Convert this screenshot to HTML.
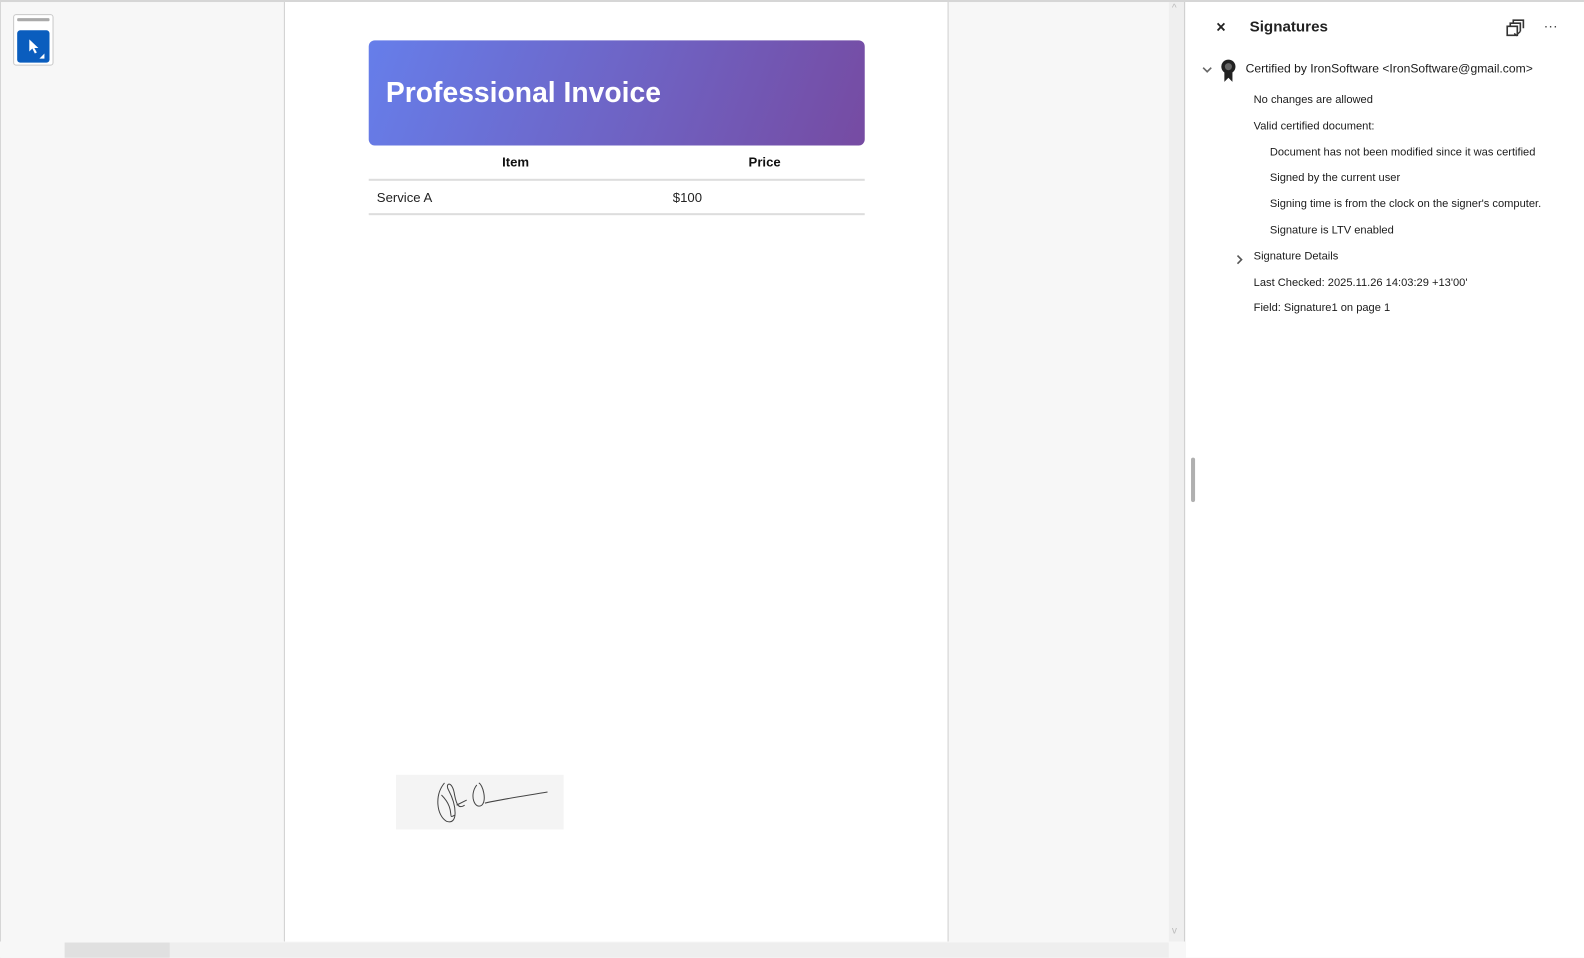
<!DOCTYPE html>
<html><head><meta charset="utf-8"><style>
*{margin:0;padding:0;box-sizing:border-box}
html,body{width:1584px;height:948px;overflow:hidden;background:#f7f7f7}
#w{position:absolute;left:0;top:0;width:1568px;height:939px;transform:scale(1.0102);transform-origin:0 0;font-family:"Liberation Sans",sans-serif;color:#222}
.abs{position:absolute}
.t{position:absolute;font-size:11px;color:#1b1b1b;white-space:nowrap}
</style></head><body><div id="w">
<div class="abs" style="left:0;top:0;width:1568px;height:2px;background:#d6d6d6"></div>
<div class="abs" style="left:0;top:0;width:1px;height:948px;background:#d6d6d6"></div>
<div class="abs" style="left:13px;top:14px;width:40px;height:51px;border:1px solid #c8c8c8;border-radius:3px;background:#fff"></div>
<div class="abs" style="left:17px;top:18px;width:32px;height:3px;background:#aaa;border-radius:1px"></div>
<div class="abs" style="left:17px;top:30px;width:32px;height:32px;background:#0a5dbe;border-radius:3px"></div>
<svg class="abs" style="left:17px;top:30px" width="32" height="32"><path d="M12 9 L12 21 L15 18 L17.5 23 L19.5 22 L17 17.5 L21 17.5 Z" fill="#fff"/><path d="M27 23 L27 28 L22 28 Z" fill="#fff"/></svg>
<div class="abs" style="left:281px;top:2px;width:658px;height:930px;background:#fff;border-left:1px solid #cfcfcf;border-right:1px solid #cfcfcf"></div>
<div class="abs" style="left:365px;top:40px;width:491px;height:104px;border-radius:6px;background:linear-gradient(110deg,#667eea,#764ba2)"></div>
<div class="t" style="left:382px;top:76px;font-size:28px;font-weight:bold;color:#fff">Professional Invoice</div>
<div class="t" style="left:497px;top:153px;font-size:13px;font-weight:bold;color:#111">Item</div>
<div class="t" style="left:741px;top:153px;font-size:13px;font-weight:bold;color:#111">Price</div>
<div class="abs" style="left:365px;top:177px;width:491px;height:2px;background:#ddd"></div>
<div class="t" style="left:373px;top:188px;font-size:13px;color:#222">Service A</div>
<div class="t" style="left:666px;top:188px;font-size:13px;color:#222">$100</div>
<div class="abs" style="left:365px;top:211px;width:491px;height:2px;background:#ddd"></div>
<div class="abs" style="left:392px;top:767px;width:166px;height:54px;background:#f4f4f4"></div>
<svg class="abs" style="left:392px;top:767px" width="166" height="54"><path d="M45 20 C60 35 50 45 58 40 M48 8 C38 20 40 40 50 46 C62 50 60 30 52 15 C48 8 56 5 58 20 C60 30 62 34 68 30 M80 10 C72 20 78 35 85 30 C90 25 86 10 82 8 M88 28 C100 25 120 22 150 17 M60 30 L70 25" fill="none" stroke="#444" stroke-width="1"/></svg>
<div class="abs" style="left:1157px;top:2px;width:16px;height:930px;background:#efefef;border-right:1px solid #d0d0d0"></div>
<div class="t" style="left:1160px;top:3px;color:#bbb;font-size:10px">^</div>
<div class="t" style="left:1160px;top:916px;color:#bbb;font-size:10px">v</div>
<div class="abs" style="left:0;top:932px;width:1157px;height:16px;background:#f7f7f7"></div>
<div class="abs" style="left:64px;top:933px;width:1093px;height:15px;background:#eeeeee"></div>
<div class="abs" style="left:64px;top:933px;width:104px;height:15px;background:#e0e0e0"></div>
<div class="abs" style="left:1174px;top:2px;width:410px;height:946px;background:#fff"></div>
<div class="abs" style="left:1179px;top:453px;width:4px;height:44px;background:#b0b0b0;border-radius:2px"></div>
<div class="t" style="left:1204px;top:19px;font-size:16px;font-weight:bold;color:#222">×</div>
<div class="t" style="left:1237px;top:18px;font-size:15px;font-weight:bold;color:#222">Signatures</div>
<svg class="abs" style="left:1489px;top:18px" width="22" height="20"><path d="M3 8 H13 V17 H3 Z M6 8 V5 H16 V13 M9 5 V2 H19 V10" fill="none" stroke="#333" stroke-width="1.6"/><path d="M10 15 L12 17 L16 13" fill="none" stroke="#333" stroke-width="1.4"/></svg>
<div class="t" style="left:1528px;top:17px;font-size:14px;color:#444">···</div>
<svg class="abs" style="left:1189px;top:64px" width="12" height="10"><path d="M2 3 L6 7 L10 3" fill="none" stroke="#666" stroke-width="1.6"/></svg>
<svg class="abs" style="left:1207px;top:58px" width="18" height="24"><circle cx="9" cy="8" r="7" fill="#222"/><circle cx="9" cy="8" r="3.5" fill="#666"/><path d="M5 13 L5 23 L9 19 L13 23 L13 13 Z" fill="#222"/></svg>
<div class="t" style="left:1233px;top:61px;font-size:12px">Certified by IronSoftware &lt;IronSoftware@gmail.com&gt;</div>
<div class="t" style="left:1241px;top:93px">No changes are allowed</div>
<div class="t" style="left:1241px;top:119px">Valid certified document:</div>
<div class="t" style="left:1257px;top:145px">Document has not been modified since it was certified</div>
<div class="t" style="left:1257px;top:170px">Signed by the current user</div>
<div class="t" style="left:1257px;top:196px">Signing time is from the clock on the signer's computer.</div>
<div class="t" style="left:1257px;top:222px">Signature is LTV enabled</div>
<svg class="abs" style="left:1222px;top:251px" width="10" height="12"><path d="M3 2 L7 6 L3 10" fill="none" stroke="#555" stroke-width="1.6"/></svg>
<div class="t" style="left:1241px;top:248px">Signature Details</div>
<div class="t" style="left:1241px;top:274px">Last Checked: 2025.11.26 14:03:29 +13'00'</div>
<div class="t" style="left:1241px;top:299px">Field: Signature1 on page 1</div>
</div></body></html>
